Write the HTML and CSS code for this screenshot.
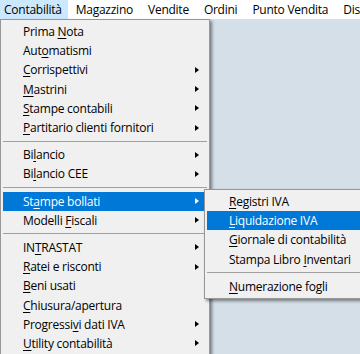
FILE: index.html
```html
<!DOCTYPE html>
<html lang="it">
<head>
<meta charset="utf-8">
<title>Contabilità</title>
<link rel="stylesheet" href="styles.css">
</head>
<body>
<div class="menubar">
  <span class="mb-item active">Contabilità</span>
  <span class="mb-item">Magazzino</span>
  <span class="mb-item">Vendite</span>
  <span class="mb-item">Ordini</span>
  <span class="mb-item">Punto Vendita</span>
  <span class="mb-item">Disti</span>
</div>
<div class="desktop"></div>

<div class="menu main-menu">
  <div class="item"><span class="label">Prima <u>N</u>ota</span></div>
  <div class="item"><span class="label">Aut<u>o</u>matismi</span></div>
  <div class="item"><span class="label"><u>C</u>orrispettivi</span><span class="arrow"></span></div>
  <div class="item"><span class="label"><u>M</u>astrini</span><span class="arrow"></span></div>
  <div class="item"><span class="label"><u>S</u>tampe contabili</span><span class="arrow"></span></div>
  <div class="item"><span class="label"><u>P</u>artitario clienti fornitori</span><span class="arrow"></span></div>
  <div class="sep"></div>
  <div class="item"><span class="label">Bi<u>l</u>ancio</span><span class="arrow"></span></div>
  <div class="item"><span class="label">Bi<u>l</u>ancio CEE</span><span class="arrow"></span></div>
  <div class="sep"></div>
  <div class="item selected"><span class="label">St<u>a</u>mpe bollati</span><span class="arrow"></span></div>
  <div class="item"><span class="label">Modelli <u>F</u>iscali</span><span class="arrow"></span></div>
  <div class="sep"></div>
  <div class="item"><span class="label">IN<u>T</u>RASTAT</span><span class="arrow"></span></div>
  <div class="item"><span class="label"><u>R</u>atei e risconti</span><span class="arrow"></span></div>
  <div class="item"><span class="label"><u>B</u>eni usati</span></div>
  <div class="item"><span class="label"><u>C</u>hiusura/apertura</span></div>
  <div class="item"><span class="label">Progressi<u>v</u>i dati IVA</span><span class="arrow"></span></div>
  <div class="item"><span class="label"><u>U</u>tility contabilità</span><span class="arrow"></span></div>
</div>

<div class="menu sub-menu">
  <div class="item"><span class="label"><u>R</u>egistri IVA</span></div>
  <div class="item selected"><span class="label"><u>L</u>iquidazione IVA</span></div>
  <div class="item"><span class="label"><u>G</u>iornale di contabilità</span></div>
  <div class="item"><span class="label">Stampa Libro <u>I</u>nventari</span></div>
  <div class="sep"></div>
  <div class="item"><span class="label"><u>N</u>umerazione fogli</span></div>
</div>
</body>
</html>
```

FILE: styles.css
```css
* { box-sizing: border-box; }
html, body {
  margin: 0;
  padding: 0;
  width: 360px;
  height: 354px;
  overflow: hidden;
}
body {
  background: #d4dfe8;
  font-family: "Segoe UI", "Open Sans", "Noto Sans", sans-serif;
  font-size: 12px;
  letter-spacing: -0.25px;
  color: #000;
  position: relative;
}
.menubar {
  display: flex;
  height: 19px;
  background: #fff;
  white-space: nowrap;
  overflow: hidden;
}
.mb-item {
  display: flex;
  align-items: center;
  padding: 0 7px 0 8px;
  height: 19px;
  line-height: 19px;
  flex: none;
}
.mb-item.active {
  background: #cce8ff;
  padding: 0 6px 0 4px;
}
.desktop {
  height: 335px;
}
.menu {
  position: absolute;
  background: #f0f0f0;
  border: 1px solid #979797;
  padding: 2px;
  box-shadow: 2px 2px 3px rgba(0, 0, 0, 0.45);
}
.main-menu {
  top: 19px;
  left: 0;
  width: 210px;
}
.sub-menu {
  top: 189px;
  left: 204px;
  width: 170px;
}
.item {
  display: flex;
  align-items: center;
  height: 19.2px;
  padding-left: 20px;
  white-space: nowrap;
}
.sub-menu .item { padding-left: 22px; }
.item.selected {
  background: #0078d7;
  color: #fff;
}
.label { line-height: 19px; }
.arrow {
  margin-left: auto;
  margin-right: 8px;
  width: 0;
  height: 0;
  border-top: 3.5px solid transparent;
  border-bottom: 3.5px solid transparent;
  border-left: 4px solid #000;
}
.item.selected .arrow { border-left-color: #fff; }
.sep {
  height: 8px;
  display: flex;
  align-items: center;
}
.sep::before {
  content: "";
  flex: 1;
  height: 1px;
  background: #a0a0a0;
}
u { text-decoration-thickness: 1px; text-underline-offset: 2px; }
```
